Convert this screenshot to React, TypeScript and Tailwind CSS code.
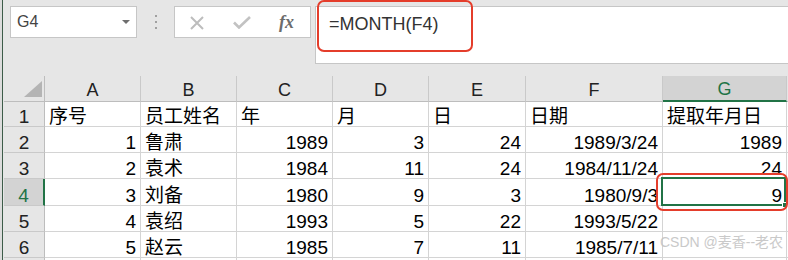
import React from "react";

const cols = [
  { k: "A", w: "w-[96px]" },
  { k: "B", w: "w-[96px]" },
  { k: "C", w: "w-[96px]" },
  { k: "D", w: "w-[96px]" },
  { k: "E", w: "w-[97px]" },
  { k: "F", w: "w-[137px]" },
  { k: "G", w: "w-[124px]" },
  { k: "", w: "w-[60px]" },
];

type V = string | number;
const rows: { h: string; n: string; cells: V[] }[] = [
  { h: "h-[25px]", n: "1", cells: ["序号", "员工姓名", "年", "月", "日", "日期", "提取年月日", ""] },
  { h: "h-[26px]", n: "2", cells: [1, "鲁肃", 1989, 3, 24, "1989/3/24", 1989, ""] },
  { h: "h-[26px]", n: "3", cells: [2, "袁术", 1984, 11, 24, "1984/11/24", 24, ""] },
  { h: "h-[27px]", n: "4", cells: [3, "刘备", 1980, 9, 3, "1980/9/3", 9, ""] },
  { h: "h-[26px]", n: "5", cells: [4, "袁绍", 1993, 5, 22, "1993/5/22", "", ""] },
  { h: "h-[26px]", n: "6", cells: [5, "赵云", 1985, 7, 11, "1985/7/11", "", ""] },
  { h: "h-[26px]", n: "", cells: ["", "", "", "", "", "", "", ""] },
];

const isRight = (v: V) => typeof v === "number" || /^\d{4}\//.test(String(v));

function Cell({ v, w }: { v: V; w: string }) {
  const right = isRight(v);
  return (
    <div
      className={`${w} shrink-0 h-full border-r border-b border-[#d4d4d4] bg-white flex items-end overflow-visible whitespace-nowrap ${
        right ? "justify-end pr-[4px]" : "justify-start pl-[4px]"
      }`}
    >
      <span className="text-[19px] leading-[18px] text-black">{v}</span>
    </div>
  );
}

export default function App() {
  return (
    <div className="relative w-[788px] h-[260px] overflow-hidden bg-[#e6e6e6] flex font-['Liberation_Sans','Noto_Sans_CJK_SC',sans-serif]">
      {/* left strip */}
      <div className="w-[4px] shrink-0 h-full flex">
        <div className="w-[2px] bg-[#dcdcdc]" />
        <div className="w-[1px] bg-[#3d5c49]" />
        <div className="w-[1px] bg-[#e6e6e6]" />
      </div>

      <div className="flex-1 flex flex-col min-w-0">
        {/* toolbar */}
        <div className="h-[76px] shrink-0 flex items-start pt-[6px] pl-[6px]">
          <div className="w-[127px] h-[32px] bg-white border border-[#c6c6c6] flex items-center justify-between pl-[6px] pr-[6px]">
            <span className="text-[16px] text-[#444] leading-none">G4</span>
            <svg width="8" height="4" viewBox="0 0 8 4">
              <polygon points="0,0 8,0 4,4" fill="#6e6e6e" />
            </svg>
          </div>
          <div className="w-[37px] h-[32px] flex flex-col items-center justify-center gap-[4px]">
            <div className="w-[2px] h-[2px] bg-[#a0a0a0]" />
            <div className="w-[2px] h-[2px] bg-[#a0a0a0]" />
            <div className="w-[2px] h-[2px] bg-[#a0a0a0]" />
          </div>
          <div className="w-[137px] h-[32px] bg-white border border-[#c6c6c6] flex items-center pl-[14px]">
            <svg width="16" height="14" viewBox="0 0 16 14" className="mt-[1px]">
              <path d="M2 1 L14 13 M14 1 L2 13" stroke="#bdbdbd" strokeWidth="2" fill="none" />
            </svg>
            <svg width="18" height="13" viewBox="0 0 18 13" className="ml-[28px] mt-[1px]">
              <path d="M1 6.5 L6 11.5 L17 1" stroke="#c2c2c2" strokeWidth="2.6" fill="none" />
            </svg>
            <span className="ml-[28px] text-[18px] italic font-bold text-[#6c6c6c] font-['Liberation_Serif',serif] leading-none">
              fx
            </span>
          </div>
          <div className="ml-[4px] flex-1 h-[58px] bg-white border-l border-t border-b border-[#c6c6c6] pl-[13px] pt-[6px]">
            <span className="text-[18px] leading-[20px] text-[#333]">=MONTH(F4)</span>
          </div>
        </div>

        {/* grid */}
        <div className="flex flex-col">
          {/* header */}
          <div className="flex h-[26px] shrink-0">
            <div className="w-[41px] shrink-0 h-full bg-[#e6e6e6] border-r border-b border-[#bdbdbd] flex items-end justify-end pr-[2px] pb-[4px]">
              <svg width="18" height="16" viewBox="0 0 18 16">
                <polygon points="18,0 18,16 0,16" fill="#b4b4b4" />
              </svg>
            </div>
            {cols.map((c, idx) => {
              const sel = c.k === "G";
              return (
                <div
                  key={idx}
                  className={`${c.w} shrink-0 h-full flex items-center justify-center pt-[2px] border-r border-[#c9c9c9] ${
                    sel
                      ? "bg-[#d3d3d3] border-b-2 border-b-[#217346] text-[#217346]"
                      : "bg-[#e6e6e6] border-b border-b-[#bdbdbd] text-[#222]"
                  }`}
                >
                  <span className="text-[18px] leading-[18px]">{c.k}</span>
                </div>
              );
            })}
          </div>

          {rows.map((r, i) => {
            const sel = i === 3;
            return (
              <div key={i} className={`flex ${r.h} shrink-0`}>
                <div
                  className={`w-[41px] shrink-0 h-full flex items-end justify-center border-b border-[#c9c9c9] ${
                    sel
                      ? "bg-[#d3d3d3] border-r-2 border-r-[#217346] text-[#217346]"
                      : "bg-[#e6e6e6] border-r border-r-[#bdbdbd] text-[#222]"
                  }`}
                >
                  <span className="text-[19px] leading-[18px]">{r.n}</span>
                </div>
                {r.cells.map((v, j) => (
                  <Cell key={j} v={v} w={cols[j].w} />
                ))}
              </div>
            );
          })}
        </div>
      </div>

      {/* overlays */}
      <div className="absolute left-[317px] top-[0px] w-[156px] h-[52px] border-2 border-[#e43d2b] rounded-[7px]" />
      <div className="absolute left-[661px] top-[177px] w-[125px] h-[29px] border-2 border-[#217346]" />
      <div className="absolute left-[782px] top-[202px] w-[6px] h-[6px] bg-[#217346] border border-white" />
      <div className="absolute left-[656px] top-[173px] w-[132px] h-[38px] border-2 border-[#e43d2b] rounded-[7px]" />
      <div className="absolute left-[660px] top-[233px] text-[14px] leading-[18px] text-[#c4c4c4] opacity-90 whitespace-nowrap">
        CSDN @麦香--老农
      </div>
    </div>
  );
}
